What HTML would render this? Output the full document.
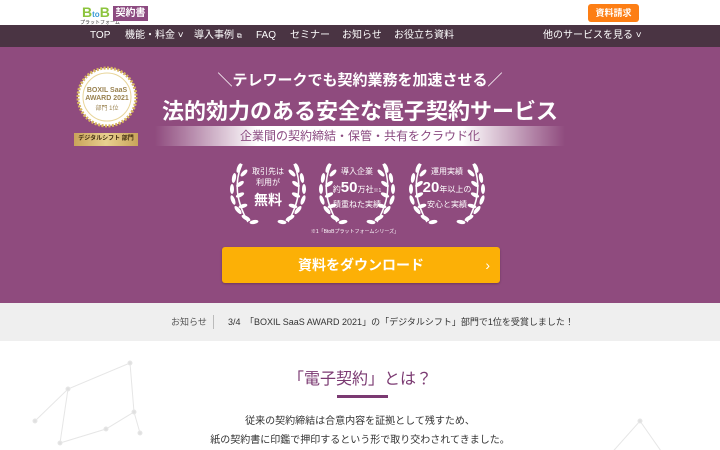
<!DOCTYPE html>
<html><head><meta charset="utf-8"><style>
*{margin:0;padding:0;box-sizing:border-box}
body{width:720px;height:450px;overflow:hidden;font-family:"Liberation Sans","Noto Sans CJK JP",sans-serif;background:#fff;position:relative}
.abs{position:absolute}
.c{text-align:center;white-space:nowrap}
</style></head><body>
<!-- header -->
<div class="abs" style="left:82px;top:5px;font-weight:bold;font-size:14px;color:#8cc43d;line-height:14px">B<span style="font-size:8px;color:#3a9bd6">to</span>B</div>
<div class="abs" style="left:80px;top:19px;font-size:5px;color:#333">プラットフォーム</div>
<div class="abs" style="left:113px;top:6px;width:35px;height:15px;background:#8c4a80;color:#fff;font-size:10px;font-weight:bold;text-align:center;line-height:15px">契約書</div>
<div class="abs" style="left:588px;top:4px;width:51px;height:18px;background:#fd7e14;border-radius:3px;color:#fff;font-size:9px;font-weight:bold;text-align:center;line-height:18px">資料請求</div>
<div class="abs" style="left:0;top:25px;width:720px;height:22px;background:#4a3443;color:#fff;font-size:10px;line-height:22px">
<span class="abs" style="left:90px">TOP</span>
<span class="abs" style="left:125px">機能・料金 ˅</span>
<span class="abs" style="left:194px">導入事例 <span style="font-size:7px">⧉</span></span>
<span class="abs" style="left:256px">FAQ</span>
<span class="abs" style="left:290px">セミナー</span>
<span class="abs" style="left:342px">お知らせ</span>
<span class="abs" style="left:394px">お役立ち資料</span>
<span class="abs" style="left:543px">他のサービスを見る ˅</span>
</div>
<!-- hero -->
<div class="abs" style="left:0;top:47px;width:720px;height:256px;background:#8f4b7e"></div>
<svg class="abs" style="left:76px;top:66px" width="62" height="62"><circle cx="31" cy="31" r="29" fill="#fff" stroke="#d8b760" stroke-width="3" stroke-dasharray="2 1.5"/><circle cx="31" cy="31" r="24" fill="none" stroke="#e8d59a" stroke-width="1"/>
<text x="31" y="26" font-size="7" font-weight="bold" fill="#9a8250" text-anchor="middle" font-family="Liberation Sans">BOXIL SaaS</text>
<text x="31" y="34" font-size="7" font-weight="bold" fill="#9a8250" text-anchor="middle" font-family="Liberation Sans">AWARD 2021</text>
<text x="31" y="44" font-size="6" fill="#9a8250" text-anchor="middle" font-family="Liberation Sans,Noto Sans CJK JP">部門 1位</text></svg>
<div class="abs c" style="left:74px;top:133px;width:64px;height:13px;background:linear-gradient(90deg,#c9a45a,#e9d08f,#c9a45a);font-size:6px;font-weight:bold;color:#3d2a10;line-height:13px">デジタルシフト 部門</div>
<div class="abs c" style="left:150px;top:69px;width:420px;color:#fff;font-size:15px;font-weight:bold">＼テレワークでも契約業務を加速させる／</div>
<div class="abs c" style="left:140px;top:94px;width:440px;color:#fff;font-size:22px;font-weight:bold">法的効力のある安全な電子契約サービス</div>
<div class="abs c" style="left:155px;top:126px;width:410px;height:20px;background:linear-gradient(90deg,rgba(255,255,255,0),#fff 25%,#fff 75%,rgba(255,255,255,0));color:#8a4a80;font-size:12px;line-height:20px">企業間の契約締結・保管・共有をクラウド化</div>
<svg width="0" height="0" style="position:absolute"><defs>
<g id="lau" fill="#fff">
<path d="M14 8 Q2 35 20 66" stroke="#fff" stroke-width="1.5" fill="none"/>
<path d="M66 8 Q78 35 60 66" stroke="#fff" stroke-width="1.5" fill="none"/>
<ellipse cx="11" cy="12" rx="2" ry="5" transform="rotate(20 11 12)"/><ellipse cx="6" cy="22" rx="2" ry="5" transform="rotate(10 6 22)"/><ellipse cx="4" cy="33" rx="2" ry="5"/><ellipse cx="5" cy="44" rx="2" ry="5" transform="rotate(-20 5 44)"/><ellipse cx="10" cy="54" rx="2" ry="5" transform="rotate(-40 10 54)"/><ellipse cx="18" cy="62" rx="2" ry="5" transform="rotate(-60 18 62)"/>
<ellipse cx="16" cy="17" rx="2" ry="4.5" transform="rotate(45 16 17)"/><ellipse cx="12" cy="28" rx="2" ry="4.5" transform="rotate(55 12 28)"/><ellipse cx="12" cy="39" rx="2" ry="4.5" transform="rotate(65 12 39)"/><ellipse cx="15" cy="50" rx="2" ry="4.5" transform="rotate(75 15 50)"/><ellipse cx="26" cy="66" rx="2" ry="4.5" transform="rotate(80 26 66)"/>
<ellipse cx="69" cy="12" rx="2" ry="5" transform="rotate(-20 69 12)"/><ellipse cx="74" cy="22" rx="2" ry="5" transform="rotate(-10 74 22)"/><ellipse cx="76" cy="33" rx="2" ry="5"/><ellipse cx="75" cy="44" rx="2" ry="5" transform="rotate(20 75 44)"/><ellipse cx="70" cy="54" rx="2" ry="5" transform="rotate(40 70 54)"/><ellipse cx="62" cy="62" rx="2" ry="5" transform="rotate(60 62 62)"/>
<ellipse cx="64" cy="17" rx="2" ry="4.5" transform="rotate(-45 64 17)"/><ellipse cx="68" cy="28" rx="2" ry="4.5" transform="rotate(-55 68 28)"/><ellipse cx="68" cy="39" rx="2" ry="4.5" transform="rotate(-65 68 39)"/><ellipse cx="65" cy="50" rx="2" ry="4.5" transform="rotate(-75 65 50)"/><ellipse cx="54" cy="66" rx="2" ry="4.5" transform="rotate(-80 54 66)"/>
</g></defs></svg>
<svg class="abs" style="left:228px;top:156px" width="80" height="72"><use href="#lau"/></svg>
<svg class="abs" style="left:317px;top:156px" width="80" height="72"><use href="#lau"/></svg>
<svg class="abs" style="left:407px;top:156px" width="80" height="72"><use href="#lau"/></svg>
<div class="abs c" style="left:238px;top:166px;width:60px;color:#fff;font-size:8px;line-height:11px">取引先は<br>利用が<br><b style="font-size:14px;line-height:24px">無料</b></div>
<div class="abs c" style="left:322px;top:166px;width:70px;color:#fff;font-size:8px;line-height:11px">導入企業<br><span>約<b style="font-size:15px;line-height:22px">50</b>万社<span style="font-size:5px">※1</span></span><br>積重ねた実績</div>
<div class="abs c" style="left:412px;top:166px;width:70px;color:#fff;font-size:8px;line-height:11px">運用実績<br><b style="font-size:15px;line-height:22px">20</b>年以上の<br>安心と実績</div>
<div class="abs c" style="left:300px;top:228px;width:110px;color:#fff;font-size:5px">※1「BtoBプラットフォームシリーズ」</div>
<div class="abs c" style="left:222px;top:247px;width:278px;height:36px;background:#fcb006;border-radius:3px;box-shadow:0 1px 2px rgba(0,0,0,.25);color:#fff;font-size:14px;font-weight:bold;line-height:36px">資料をダウンロード<span class="abs" style="right:10px;top:0;font-weight:normal">›</span></div>
<!-- notice -->
<div class="abs" style="left:0;top:303px;width:720px;height:38px;background:#efefef;font-size:9px;color:#333;line-height:38px">
<span class="abs" style="left:171px;color:#555">お知らせ</span>
<span class="abs" style="left:213px;top:12px;width:1px;height:14px;background:#bbb"></span>
<span class="abs" style="left:228px">3/4　「BOXIL SaaS AWARD 2021」の「デジタルシフト」部門で1位を受賞しました！</span>
</div>
<!-- network bg -->
<svg class="abs" style="left:0;top:341px" width="720" height="109" stroke="#e6e6e6" fill="#e0e0e0">
<path d="M130 22 L68 48 L35 80 M68 48 L60 102 L106 88 L134 71 L130 22 M134 71 L140 92 M106 88 L60 102" fill="none"/>
<circle cx="130" cy="22" r="2"/><circle cx="68" cy="48" r="2"/><circle cx="35" cy="80" r="2"/><circle cx="134" cy="71" r="2"/><circle cx="106" cy="88" r="2"/><circle cx="60" cy="102" r="2"/><circle cx="140" cy="92" r="2"/>
<path d="M640 80 L675 130 M640 80 L600 125" fill="none"/><circle cx="640" cy="80" r="2"/>
</svg>
<div class="abs c" style="left:0;top:368px;width:720px;color:#7b3a72;font-size:16px;line-height:24px">「電子契約」とは？</div>
<div class="abs" style="left:337px;top:395px;width:51px;height:3px;background:#7b3a72"></div>
<div class="abs c" style="left:0;top:412px;width:720px;color:#333;font-size:10px;line-height:19px">従来の契約締結は合意内容を証拠として残すため、<br>紙の契約書に印鑑で押印するという形で取り交わされてきました。</div>
</body></html>
